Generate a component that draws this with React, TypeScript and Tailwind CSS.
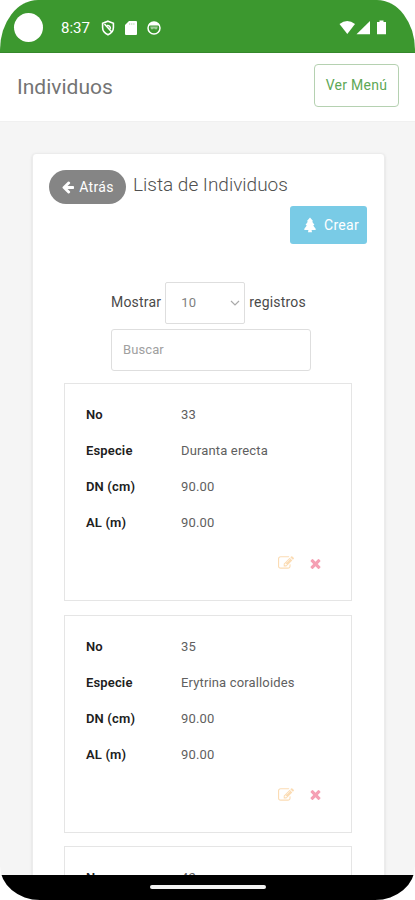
interface Individuo {
  no: string;
  especie: string;
  dn: string;
  al: string;
}

const individuos: Individuo[] = [
  { no: "33", especie: "Duranta erecta", dn: "90.00", al: "90.00" },
  { no: "35", especie: "Erytrina coralloides", dn: "90.00", al: "90.00" },
  { no: "42", especie: "Duranta erecta", dn: "90.00", al: "90.00" },
];

function ArrowLeftIcon() {
  return (
    <svg viewBox="0 0 1792 1792" className="h-[14px] w-[14px] fill-current">
      <path d="M1664 896v128q0 53-32.5 90.5t-84.5 37.5h-704l293 294q38 36 38 90t-38 90l-75 76q-37 37-90 37-52 0-91-37l-651-652q-37-37-37-90 0-52 37-91l651-650q38-38 91-38 52 0 90 38l75 74q38 38 38 91t-38 91l-293 293h704q52 0 84.5 37.5t32.5 90.5z" />
    </svg>
  );
}

function TreeIcon() {
  return (
    <svg viewBox="0 0 14 16" className="h-4 w-[14px] fill-current">
      <path d="M7 .6 10 4 9.2 4.7 11.4 7.8 10.2 8.5 12.8 12Q13 12.8 12.3 12.9H8.6L9 15.3H5L5.4 12.9H1.7Q1 12.8 1.2 12L3.8 8.5 2.6 7.8 4.8 4.7 4 4Z" />
    </svg>
  );
}

function EditIcon() {
  return (
    <svg viewBox="0 0 1792 1792" className="h-4 w-4 fill-[#fbdcb4]">
      <path d="M888 1184l116-116-152-152-116 116v56h96v96h56zm440-720q-16-16-33 1l-350 350q-17 17-1 33t33-1l350-350q17-17 1-33zm80 594v190q0 119-84.5 203.5t-203.5 84.5h-832q-119 0-203.5-84.5t-84.5-203.5v-832q0-119 84.5-203.5t203.5-84.5h832q63 0 117 25 15 7 18 23 3 17-9 29l-49 49q-14 14-32 8-23-6-45-6h-832q-66 0-113 47t-47 113v832q0 66 47 113t113 47h832q66 0 113-47t47-113v-126q0-13 9-22l64-64q15-15 35-7t20 29zm-96-738l288 288-672 672h-288v-288zm444 132l-92 92-288-288 92-92q28-28 68-28t68 28l152 152q28 28 28 68t-28 68z" />
    </svg>
  );
}

function DeleteIcon() {
  return (
    <svg viewBox="0 0 1792 1792" className="h-[15px] w-[15px] fill-[#f5a0b4]">
      <path d="M1490 1322q0 40-28 68l-136 136q-28 28-68 28t-68-28l-294-294-294 294q-28 28-68 28t-68-28l-136-136q-28-28-28-68t28-68l294-294-294-294q-28-28-28-68t28-68l136-136q28-28 68-28t68 28l294 294 294-294q28-28 68-28t68 28l136 136q28 28 28 68t-28 68l-294 294 294 294q28 28 28 68z" />
    </svg>
  );
}

function StatusBar() {
  return (
    <div className="flex h-[53px] shrink-0 items-center border-b border-[#35882b] bg-[#3c982f] pt-[3px] pl-[14px] text-white">
      <div className="h-[29px] w-[29px] rounded-full bg-white" />
      <span className="mt-[2px] ml-[18px] w-[40px] text-[15px]">8:37</span>
      <svg viewBox="0 0 14 16" className="h-4 w-[14px]" fill="none" stroke="white" strokeWidth="1.6">
        <path d="M7 1.2 12.4 3.2V7.5C12.4 11 10 13.5 7 14.8 4 13.5 1.6 11 1.6 7.5V3.2Z" />
        <path d="M3.5 4 10.8 12" />
        <path d="M6 5.5A2.8 2.8 0 0 1 9.3 8.8" />
      </svg>
      <svg viewBox="0 0 12 14" className="ml-[10px] h-[14px] w-3" fill="white">
        <path d="M4 0H11Q12 0 12 1V13Q12 14 11 14H1Q0 14 0 13V4Z" />
        <path d="M4.7 2V4M6.8 2V4M8.9 2V4" stroke="#3c982f" strokeWidth=".3" />
      </svg>
      <svg viewBox="0 0 14 14" className="ml-[10px] h-[14px] w-[14px]">
        <circle cx="7" cy="7" r="6" fill="none" stroke="white" strokeWidth="1.5" />
        <path d="M1.5 4.5A6 6 0 0 1 12.5 4.5Z" fill="white" />
        <path d="M3.2 5.5H10.8L10 8.2H7.8L7 7 6.2 8.2H4Z" fill="white" opacity=".5" />
      </svg>
      <svg viewBox="0 0 48 15" className="mr-[28px] ml-auto h-[15px] w-12" fill="white">
        <path d="M.5 4Q8.3-2 16 4L8.3 14Z" />
        <path d="M17.5 14.2 31 1V14.2Z" />
        <path d="M38 2H40.5V.5H44.5V2H47V14.2H38Z" />
      </svg>
    </div>
  );
}

function Row({ label, value }: { label: string; value: string }) {
  return (
    <div className="flex h-9 items-center text-[13px] tracking-[0.15px]">
      <span className="w-[95px] font-semibold text-[#202020]">{label}</span>
      <span className="text-[#606060]">{value}</span>
    </div>
  );
}

function IndividuoCard({ item }: { item: Individuo }) {
  return (
    <div className="h-[218px] shrink-0 border border-[#e5e5e5] pt-[13px] pl-[21px]">
      <Row label="No" value={item.no} />
      <Row label="Especie" value={item.especie} />
      <Row label="DN (cm)" value={item.dn} />
      <Row label="AL (m)" value={item.al} />
      <div className="flex items-center justify-end gap-[14px] pt-[14px] pr-[28px]">
        <EditIcon />
        <DeleteIcon />
      </div>
    </div>
  );
}

export default function App() {
  return (
    <div className="h-[900px] w-[415px] bg-white font-[Roboto,sans-serif]">
      <div className="flex h-[900px] flex-col overflow-hidden rounded-t-[38px_50px] rounded-b-[40px_34px] bg-[#f5f5f5]">
        <StatusBar />

        <header className="flex h-[69px] shrink-0 items-center justify-between border-b border-[#f0f0f0] bg-white pr-4 pl-[17px]">
          <h1 className="pt-[2px] text-[21px] text-[#747474]">Individuos</h1>
          <button className="mb-[3px] h-[43px] w-[85px] rounded-[4px] border border-[#b5d1b1] text-[14px] tracking-[0.3px] text-[#5da856]">
            Ver Menú
          </button>
        </header>

        <main className="min-h-0 flex-1 overflow-hidden pr-[30px] pl-8 pt-[31px]">
          <section className="rounded-[4px] border border-[#ececec] bg-white px-4 pt-4 shadow-sm">
            <div className="flex items-start">
              <button className="flex h-[34px] w-[77px] items-center justify-center gap-1 rounded-full bg-[#858585] text-[14px] tracking-[0.3px] text-white">
                <ArrowLeftIcon />
                Atrás
              </button>
              <h2 className="ml-[7px] text-[19px] leading-[30px] font-light text-[#505050]">Lista de Individuos</h2>
            </div>
            <div className="mt-[2px] flex justify-end pr-px">
              <button className="flex h-[38px] w-[77px] items-center justify-end gap-[7px] rounded-[3px] bg-[#79cbe6] pr-[8px] text-[14px] tracking-[0.3px] text-white">
                <TreeIcon />
                Crear
              </button>
            </div>

            <div className="mt-[38px] flex items-center justify-center gap-1 text-[14px] tracking-[0.2px] text-[#4a4a4a]">
              <span className="pb-[2px]">Mostrar</span>
              <div className="flex h-[42px] w-[80px] items-center justify-between rounded-[2px] border border-[#dedede] pr-1 pl-[15px] text-[13px] text-[#808080]">
                10
                <svg viewBox="0 0 10 6" className="h-[6px] w-[10px]" fill="none" stroke="#aaa" strokeWidth="1.2">
                  <path d="M1 1 5 5 9 1" />
                </svg>
              </div>
              <span className="pb-[2px]">registros</span>
            </div>
            <input
              placeholder="Buscar"
              className="mt-[5px] ml-[62px] block h-[42px] w-[200px] rounded-[3px] border border-[#dedede] px-[11px] pb-[2px] text-[13px] tracking-[0.1px] placeholder:text-[#a0a0a0]"
            />

            <div className="mt-3 ml-[15px] flex w-[288px] flex-col gap-[13.5px]">
              {individuos.map((item) => (
                <IndividuoCard key={item.no} item={item} />
              ))}
            </div>
          </section>
        </main>

        <div className="flex h-[25px] shrink-0 justify-center bg-black pt-[10px]">
          <div className="h-1 w-[116px] rounded-full bg-[#f2f2f2]" />
        </div>
      </div>
    </div>
  );
}
